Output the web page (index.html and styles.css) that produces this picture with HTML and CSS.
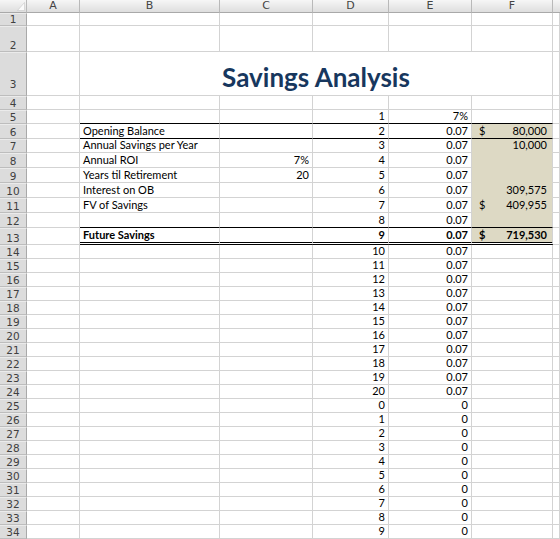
FILE: index.html
```html
<!DOCTYPE html>
<html>
<head>
<meta charset="utf-8">
<link rel="stylesheet" href="styles.css">
</head>
<body>
<div class="sheet">
  <div class="row h13">
    <div class="corner"><svg width="8" height="9" viewBox="0 0 8 9"><polygon points="7.5,0.5 7.5,8.5 0.5,8.5" fill="#fbfbfb" stroke="#c8c8c8" stroke-width="0.6"/></svg></div>
    <div class="ch">A</div><div class="ch">B</div><div class="ch">C</div><div class="ch">D</div><div class="ch">E</div><div class="ch">F</div><div class="ch last"></div>
  </div>
  <div class="row h13"><div class="rh">1</div><div class="c"></div><div class="c"></div><div class="c"></div><div class="c"></div><div class="c"></div><div class="c"></div><div class="c"></div></div>
  <div class="row h26"><div class="rh">2</div><div class="c"></div><div class="c"></div><div class="c"></div><div class="c"></div><div class="c"></div><div class="c"></div><div class="c"></div></div>
  <div class="row h44"><div class="rh r3">3</div><div class="c"></div><div class="c title">Savings Analysis</div><div class="c"></div></div>
  <div class="row h14"><div class="rh">4</div><div class="c"></div><div class="c"></div><div class="c"></div><div class="c"></div><div class="c"></div><div class="c"></div><div class="c"></div></div>
  <div class="row h14"><div class="rh">5</div><div class="c"></div><div class="c tb"></div><div class="c tb"></div><div class="c n tb">1</div><div class="c n tb">7%</div><div class="c tb"></div><div class="c"></div></div>
  <div class="row h15"><div class="rh">6</div><div class="c"></div><div class="c tb">Opening Balance</div><div class="c tb"></div><div class="c n tb">2</div><div class="c n tb">0.07</div><div class="c acc tan tb"><span>$</span><span>80,000</span></div><div class="c"></div></div>
  <div class="row h14"><div class="rh">7</div><div class="c"></div><div class="c">Annual Savings per Year</div><div class="c"></div><div class="c n">3</div><div class="c n">0.07</div><div class="c acc tan"><span></span><span>10,000</span></div><div class="c"></div></div>
  <div class="row h15"><div class="rh">8</div><div class="c"></div><div class="c">Annual ROI</div><div class="c n">7%</div><div class="c n">4</div><div class="c n">0.07</div><div class="c tan"></div><div class="c"></div></div>
  <div class="row h15"><div class="rh">9</div><div class="c"></div><div class="c">Years til Retirement</div><div class="c n">20</div><div class="c n">5</div><div class="c n">0.07</div><div class="c tan"></div><div class="c"></div></div>
  <div class="row h15"><div class="rh">10</div><div class="c"></div><div class="c">Interest on OB</div><div class="c"></div><div class="c n">6</div><div class="c n">0.07</div><div class="c acc tan"><span></span><span>309,575</span></div><div class="c"></div></div>
  <div class="row h15"><div class="rh">11</div><div class="c"></div><div class="c">FV of Savings</div><div class="c"></div><div class="c n">7</div><div class="c n">0.07</div><div class="c acc tan"><span>$</span><span>409,955</span></div><div class="c"></div></div>
  <div class="row h15"><div class="rh">12</div><div class="c"></div><div class="c tb"></div><div class="c tb"></div><div class="c n tb">8</div><div class="c n tb">0.07</div><div class="c tan tb"></div><div class="c"></div></div>
  <div class="row h17 bold"><div class="rh">13</div><div class="c"></div><div class="c dbl">Future Savings</div><div class="c dbl"></div><div class="c n dbl">9</div><div class="c n dbl">0.07</div><div class="c acc tan dbl"><span>$</span><span>719,530</span></div><div class="c"></div></div>
  <div class="row h14"><div class="rh">14</div><div class="c"></div><div class="c"></div><div class="c"></div><div class="c n">10</div><div class="c n">0.07</div><div class="c"></div><div class="c"></div></div>
  <div class="row h14"><div class="rh">15</div><div class="c"></div><div class="c"></div><div class="c"></div><div class="c n">11</div><div class="c n">0.07</div><div class="c"></div><div class="c"></div></div>
  <div class="row h14"><div class="rh">16</div><div class="c"></div><div class="c"></div><div class="c"></div><div class="c n">12</div><div class="c n">0.07</div><div class="c"></div><div class="c"></div></div>
  <div class="row h14"><div class="rh">17</div><div class="c"></div><div class="c"></div><div class="c"></div><div class="c n">13</div><div class="c n">0.07</div><div class="c"></div><div class="c"></div></div>
  <div class="row h14"><div class="rh">18</div><div class="c"></div><div class="c"></div><div class="c"></div><div class="c n">14</div><div class="c n">0.07</div><div class="c"></div><div class="c"></div></div>
  <div class="row h14"><div class="rh">19</div><div class="c"></div><div class="c"></div><div class="c"></div><div class="c n">15</div><div class="c n">0.07</div><div class="c"></div><div class="c"></div></div>
  <div class="row h14"><div class="rh">20</div><div class="c"></div><div class="c"></div><div class="c"></div><div class="c n">16</div><div class="c n">0.07</div><div class="c"></div><div class="c"></div></div>
  <div class="row h14"><div class="rh">21</div><div class="c"></div><div class="c"></div><div class="c"></div><div class="c n">17</div><div class="c n">0.07</div><div class="c"></div><div class="c"></div></div>
  <div class="row h14"><div class="rh">22</div><div class="c"></div><div class="c"></div><div class="c"></div><div class="c n">18</div><div class="c n">0.07</div><div class="c"></div><div class="c"></div></div>
  <div class="row h14"><div class="rh">23</div><div class="c"></div><div class="c"></div><div class="c"></div><div class="c n">19</div><div class="c n">0.07</div><div class="c"></div><div class="c"></div></div>
  <div class="row h14"><div class="rh">24</div><div class="c"></div><div class="c"></div><div class="c"></div><div class="c n">20</div><div class="c n">0.07</div><div class="c"></div><div class="c"></div></div>
  <div class="row h14"><div class="rh">25</div><div class="c"></div><div class="c"></div><div class="c"></div><div class="c n">0</div><div class="c n">0</div><div class="c"></div><div class="c"></div></div>
  <div class="row h14"><div class="rh">26</div><div class="c"></div><div class="c"></div><div class="c"></div><div class="c n">1</div><div class="c n">0</div><div class="c"></div><div class="c"></div></div>
  <div class="row h14"><div class="rh">27</div><div class="c"></div><div class="c"></div><div class="c"></div><div class="c n">2</div><div class="c n">0</div><div class="c"></div><div class="c"></div></div>
  <div class="row h14"><div class="rh">28</div><div class="c"></div><div class="c"></div><div class="c"></div><div class="c n">3</div><div class="c n">0</div><div class="c"></div><div class="c"></div></div>
  <div class="row h14"><div class="rh">29</div><div class="c"></div><div class="c"></div><div class="c"></div><div class="c n">4</div><div class="c n">0</div><div class="c"></div><div class="c"></div></div>
  <div class="row h14"><div class="rh">30</div><div class="c"></div><div class="c"></div><div class="c"></div><div class="c n">5</div><div class="c n">0</div><div class="c"></div><div class="c"></div></div>
  <div class="row h14"><div class="rh">31</div><div class="c"></div><div class="c"></div><div class="c"></div><div class="c n">6</div><div class="c n">0</div><div class="c"></div><div class="c"></div></div>
  <div class="row h14"><div class="rh">32</div><div class="c"></div><div class="c"></div><div class="c"></div><div class="c n">7</div><div class="c n">0</div><div class="c"></div><div class="c"></div></div>
  <div class="row h14"><div class="rh">33</div><div class="c"></div><div class="c"></div><div class="c"></div><div class="c n">8</div><div class="c n">0</div><div class="c"></div><div class="c"></div></div>
  <div class="row h14"><div class="rh">34</div><div class="c"></div><div class="c"></div><div class="c"></div><div class="c n">9</div><div class="c n">0</div><div class="c"></div><div class="c"></div></div>
</div>
</body>
</html>
```

FILE: styles.css
```css
html, body {
  margin: 0;
  padding: 0;
  background: #fff;
}
.sheet {
  width: 560px;
  height: 539px;
  overflow: hidden;
}
.row {
  display: grid;
  grid-template-columns: 27px 53px 140px 93px 76px 83px 81px 1fr;
}
.h13 { height: 13px; }
.h14 { height: 14px; }
.h15 { height: 15px; }
.h17 { height: 17px; }
.h26 { height: 26px; }
.h44 { height: 44px; }

.corner, .ch {
  box-sizing: border-box;
  background: linear-gradient(#f6f6f6, #dedede);
  border-right: 1px solid #b9b9b9;
  border-bottom: 1px solid #a9a9a9;
}
.corner {
  display: flex;
  align-items: flex-end;
  justify-content: flex-end;
  padding: 0 1px 1px 0;
}
.corner svg { display: block; }
.ch {
  font: 11px/12px "DejaVu Sans", sans-serif;
  color: #444;
  text-align: center;
}
.ch.last { border-right: none; }

.rh {
  box-sizing: border-box;
  background: #dcdcdc;
  border-right: 1px solid #a9a9a9;
  border-bottom: 1px solid #bdbdbd;
  border-top: 1px solid #ebebeb;
  font: 10.5px/10px "DejaVu Sans", sans-serif;
  color: #404040;
  display: flex;
  align-items: flex-end;
  justify-content: center;
  padding-bottom: 1px;
}
.rh.r3 { padding-bottom: 6px; }

.c {
  box-sizing: border-box;
  border-right: 1px solid #d3d3d3;
  border-bottom: 1px solid #d3d3d3;
  display: flex;
  align-items: flex-end;
  padding: 0 3px 2px 3px;
  font: 11px/11px Lato, "Open Sans", sans-serif;
  color: #000;
  white-space: nowrap;
  overflow: hidden;
}
.n {
  justify-content: flex-end;
  padding-right: 3px;
}
.acc {
  justify-content: space-between;
  padding-left: 7px;
  padding-right: 5px;
}
.tan {
  background: #ddd9c4;
  background-clip: padding-box;
  border-bottom-color: #ddd9c4;
}
.tb { border-bottom: 1px solid #000; }
.dbl { border-bottom: 3px double #000; }
.bold .c { font-weight: 700; }

.title {
  grid-column: span 5;
  justify-content: center;
  font: 700 26px/26px Lato, "Open Sans", sans-serif;
  color: #17375e;
  padding-bottom: 5px;
}
```
